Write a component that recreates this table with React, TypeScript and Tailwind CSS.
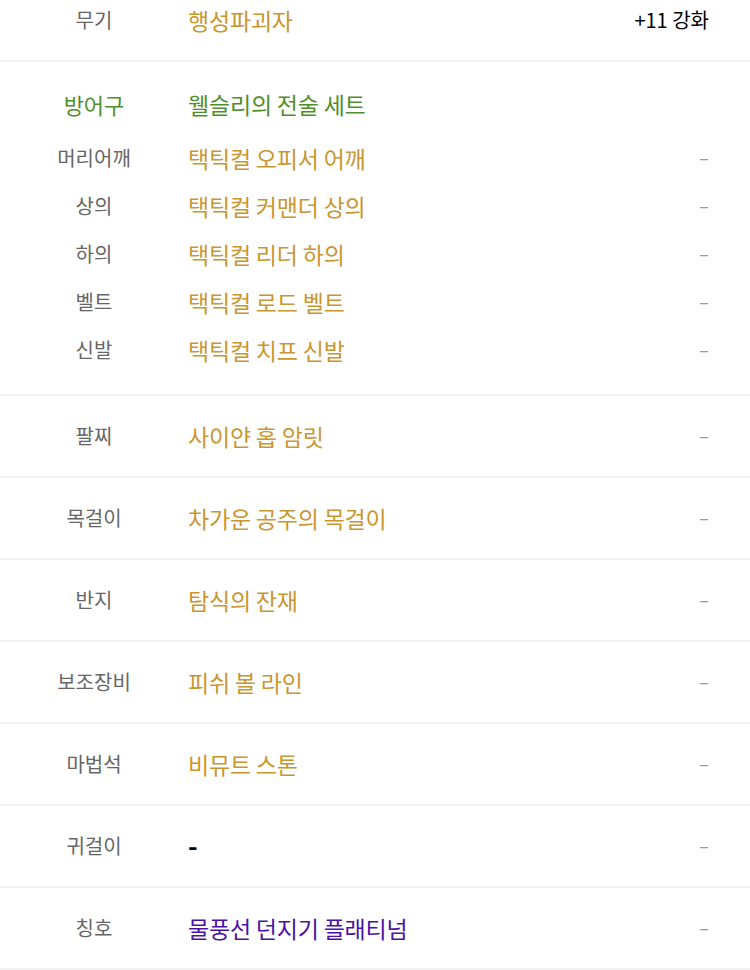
const FONT = "font-['Noto_Sans_CJK_KR','Noto_Sans',sans-serif]";

type Row = {
  label: string;
  name: string;
  tone?: "gold" | "green" | "purple" | "black";
  right?: string;
};

const toneClass = {
  gold: "text-[#c9962f]",
  green: "text-[#4f8f2b]",
  purple: "text-[#4a12a5]",
  black: "text-black",
};

const armor: Row[] = [
  { label: "머리어깨", name: "택틱컬 오피서 어깨" },
  { label: "상의", name: "택틱컬 커맨더 상의" },
  { label: "하의", name: "택틱컬 리더 하의" },
  { label: "벨트", name: "택틱컬 로드 벨트" },
  { label: "신발", name: "택틱컬 치프 신발" },
];

const rest: Row[] = [
  { label: "팔찌", name: "사이얀 홉 암릿" },
  { label: "목걸이", name: "차가운 공주의 목걸이" },
  { label: "반지", name: "탐식의 잔재" },
  { label: "보조장비", name: "피쉬 볼 라인" },
  { label: "마법석", name: "비뮤트 스톤" },
  { label: "귀걸이", name: "-", tone: "black" },
  { label: "칭호", name: "물풍선 던지기 플래티넘", tone: "purple" },
];

const Dash = () => (
  <span className="text-[18px] leading-none text-[#9a9a9a]">–</span>
);

const Line = ({ row, h, labelTone }: { row: Row; h: string; labelTone?: string }) => (
  <div className={`flex items-center ${h}`}>
    <div className={`w-[188px] shrink-0 text-center text-[20px] ${labelTone ?? "text-[#666]"}`}>
      {row.label}
    </div>
    <div
      className={`flex-1 tracking-[-0.2px] ${toneClass[row.tone ?? "gold"]} ${
        row.name === "-" ? "text-[26px] font-bold -mt-1" : "text-[23px]"
      }`}
    >
      {row.name}
    </div>
    <div className="pr-[41px] text-right">
      {row.right ? <span className="text-[20px] text-black">{row.right}</span> : <Dash />}
    </div>
  </div>
);

export default function App() {
  return (
    <div className={`w-[750px] h-[970px] overflow-hidden bg-white ${FONT}`}>
      <div className="-mt-[20px]">
        <div className="border-b-2 border-[#f2f2f2]">
          <Line row={{ label: "무기", name: "행성파괴자", right: "+11 강화" }} h="h-[80px]" />
        </div>

        <div className="border-b-2 border-[#f2f2f2] pt-[18px] pb-[20px]">
          <Line
            row={{ label: "방어구", name: "웰슬리의 전술 세트", tone: "green", right: " " }}
            h="h-[48px]"
            labelTone="text-[#4f8f2b] !text-[22px]"
          />
          <div className="mt-[6px]">
            {armor.map((r) => (
              <Line key={r.label} row={r} h="h-[48px]" />
            ))}
          </div>
        </div>

        {rest.map((r) => (
          <div key={r.label} className="border-b-2 border-[#f2f2f2]">
            <Line row={r} h="h-[80px]" />
          </div>
        ))}
      </div>
    </div>
  );
}
